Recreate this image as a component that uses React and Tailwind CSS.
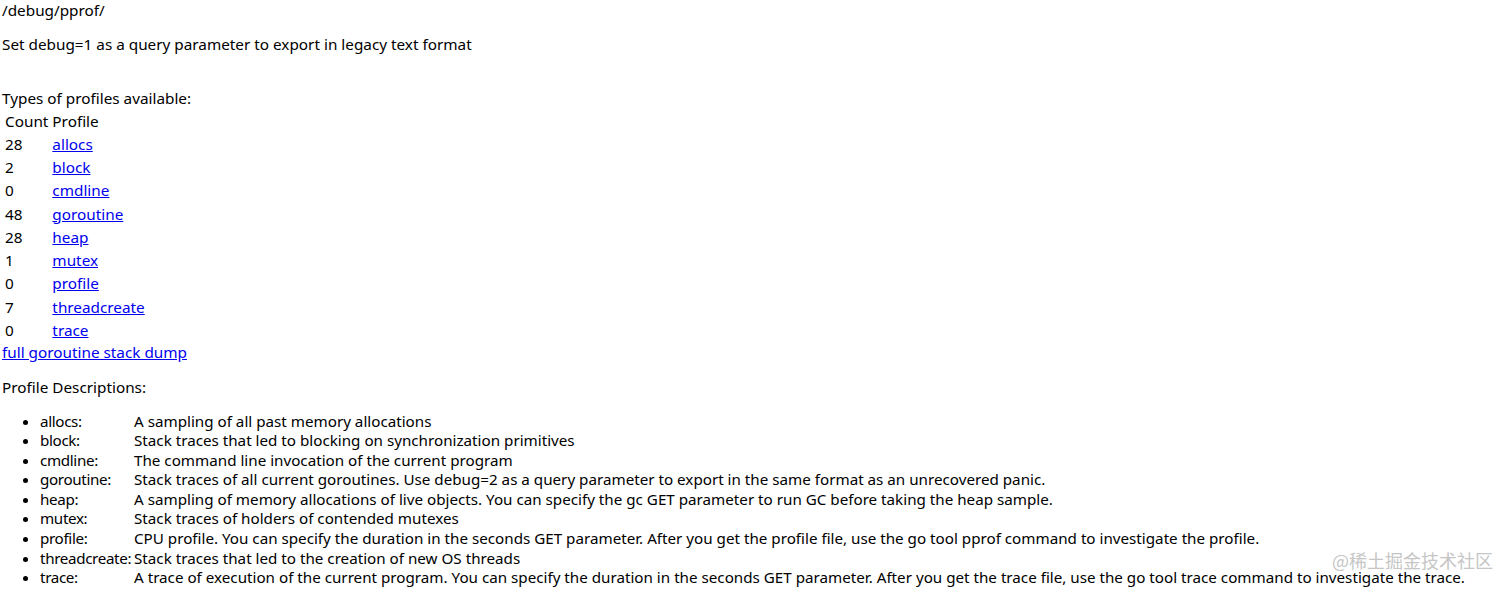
import React from "react";

const PROFILES = [
  ["28", "allocs"],
  ["2", "block"],
  ["0", "cmdline"],
  ["48", "goroutine"],
  ["28", "heap"],
  ["1", "mutex"],
  ["0", "profile"],
  ["7", "threadcreate"],
  ["0", "trace"],
];

const DESCRIPTIONS = [
  ["allocs:", "A sampling of all past memory allocations"],
  ["block:", "Stack traces that led to blocking on synchronization primitives"],
  ["cmdline:", "The command line invocation of the current program"],
  ["goroutine:", "Stack traces of all current goroutines. Use debug=2 as a query parameter to export in the same format as an unrecovered panic."],
  ["heap:", "A sampling of memory allocations of live objects. You can specify the gc GET parameter to run GC before taking the heap sample."],
  ["mutex:", "Stack traces of holders of contended mutexes"],
  ["profile:", "CPU profile. You can specify the duration in the seconds GET parameter. After you get the profile file, use the go tool pprof command to investigate the profile."],
  ["threadcreate:", "Stack traces that led to the creation of new OS threads"],
  ["trace:", "A trace of execution of the current program. You can specify the duration in the seconds GET parameter. After you get the trace file, use the go tool trace command to investigate the trace."],
];

export default function App() {
  return (
    <div className="relative min-h-[593px] bg-white pl-[2px] pt-[1px] text-[15.3px] leading-[19.5px] text-black" style={{ fontFamily: '"Noto Sans", "Noto Sans CJK SC", sans-serif' }}>
      <div>/debug/pprof/</div>
      <p className="mt-[14.5px]">Set debug=1 as a query parameter to export in legacy text format</p>
      <div className="mt-[34.5px]">Types of profiles available:</div>

      <table className="border-separate border-spacing-[2px] leading-[19.25px]">
        <thead>
          <tr>
            <td className="w-[45px] p-[1px]">Count</td>
            <td className="p-[1px]">Profile</td>
          </tr>
        </thead>
        <tbody>
          {PROFILES.map(([count, name]) => (
            <tr key={name}>
              <td className="p-[1px]">{count}</td>
              <td className="p-[1px]">
                <a href="#" className="text-[#0000ee] underline">{name}</a>
              </td>
            </tr>
          ))}
        </tbody>
      </table>

      <a href="#" className="text-[#0000ee] underline">full goroutine stack dump</a>

      <p className="mt-[15px]">Profile Descriptions:</p>
      <ul className="mt-[14.5px] list-disc pl-[38px] text-[15.2px] leading-[19.6px]">
        {DESCRIPTIONS.map(([name, desc]) => (
          <li key={name}>
            <div className="inline-block w-[94px] whitespace-nowrap tracking-[-0.35px]">{name}</div>
            {desc}
          </li>
        ))}
      </ul>

      {/* watermark */}
      <div className="absolute right-[19px] top-[551px] text-[18px] text-[#c6c6c6]" style={{ fontFamily: '"Noto Sans CJK SC", sans-serif' }}>
        @稀土掘金技术社区
      </div>
    </div>
  );
}
